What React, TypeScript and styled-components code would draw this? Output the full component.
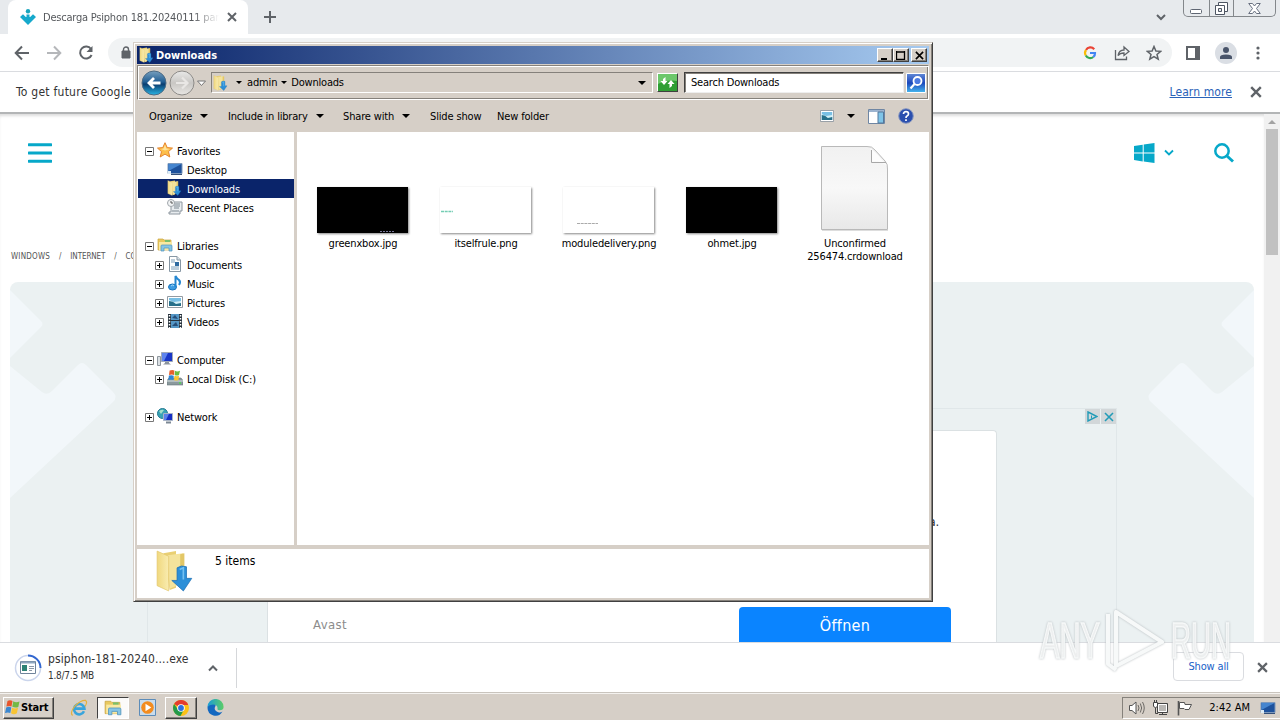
import React from "react";
import styled, { createGlobalStyle, css } from "styled-components";

const GlobalStyle = createGlobalStyle`
  * { box-sizing: border-box; }
  body {
    margin: 0;
    overflow: hidden;
    font-family: "DejaVu Sans Condensed", "DejaVu Sans", sans-serif;
    font-size: 11px;
    color: #000;
  }
  svg { display: block; flex: none; }
`;

const face = "#d6cfc7";
const navy = "#0a246a";
const cyan = "#06a8c9";
const chromeGrey = "#5f6368";

const raised = css`
  border: 1px solid;
  border-color: #fff #404040 #404040 #fff;
  box-shadow: inset -1px -1px 0 #85817b;
`;

/* spacing nudges a run of text to its Tahoma width */
const Label = styled.span<{ $size?: number; $spacing?: number; $color?: string; $bold?: boolean }>`
  font-size: ${(p) => p.$size ?? 11}px;
  letter-spacing: ${(p) => p.$spacing ?? -0.15}px;
  color: ${(p) => p.$color ?? "inherit"};
  font-weight: ${(p) => (p.$bold ? "bold" : "normal")};
  line-height: 13px;
  white-space: nowrap;
`;

const Desktop = styled.div`
  position: relative;
  display: flex;
  flex-direction: column;
  width: 1280px;
  height: 720px;
  overflow: hidden;
  background: #fff;
`;

/* ---------- browser ---------- */

const TabStrip = styled.div`
  display: flex;
  height: 34px;
  background: #e7eaed;
`;

const Tab = styled.div`
  display: flex;
  align-items: center;
  width: 240px;
  height: 34px;
  margin-left: 8px;
  padding-left: 12px;
  border-radius: 8px 8px 0 0;
  background: #fff;
`;

const TabTitle = styled.div`
  width: 176px;
  margin: 0 8px 0 7px;
  overflow: hidden;
  mask-image: linear-gradient(to right, #000 150px, transparent 176px);
`;

const NewTab = styled.div`
  padding: 11px 0 0 16px;
`;

const TabSearch = styled.div`
  margin-left: auto;
  padding: 12px 17px 0 0;
`;

const WindowControls = styled.div`
  display: flex;
  width: 93px;
  height: 17px;
  margin-right: 4px;
  border: 1px solid #83878b;
  border-top: 0;
  border-radius: 0 0 5px 5px;
`;

const WindowControl = styled.div<{ $width: number }>`
  display: flex;
  align-items: center;
  justify-content: center;
  width: ${(p) => p.$width}px;
  & + & { border-left: 1px solid #83878b; }
`;

const Toolbar = styled.div`
  display: flex;
  align-items: center;
  height: 38px;
  padding: 0 14px;
  border-bottom: 1px solid #dadce0;
`;

const NavButtons = styled.div`
  display: flex;
  align-items: center;
  gap: 16px;
  width: 94px;
`;

const Omnibox = styled.div`
  display: flex;
  align-items: center;
  width: 1064px;
  height: 29px;
  padding: 0 10px 0 13px;
  border-radius: 15px;
  background: #f1f3f4;
`;

const OmniActions = styled.div`
  display: flex;
  align-items: center;
  gap: 16px;
  margin-left: auto;
`;

const ToolbarEnd = styled.div`
  display: flex;
  align-items: center;
  justify-content: space-between;
  width: 81px;
  margin-left: 13px;
`;

const Avatar = styled.div`
  display: flex;
  align-items: center;
  justify-content: center;
  width: 22px;
  height: 22px;
  border-radius: 50%;
  background: #dadee4;
`;

const InfoBar = styled.div`
  display: flex;
  align-items: center;
  height: 42px;
  padding: 0 18px 0 16px;
  border-bottom: 2px solid #b3b5b6;
`;

const LearnMore = styled.a`
  margin: 0 18px 0 auto;
  color: #2a62b8;
  text-decoration: underline;
  text-underline-offset: 1px;
`;

const Viewport = styled.div`
  display: flex;
  height: 528px;
`;

const Page = styled.div`
  display: flex;
  flex-direction: column;
  width: 1264px;
  height: 528px;
  overflow: hidden;
  box-shadow: inset 0 3px 3px -1px #ddd;
`;

const SiteHeader = styled.div`
  display: flex;
  align-items: center;
  height: 78px;
  padding: 0 30px 0 28px;
`;

const SiteActions = styled.div`
  display: flex;
  align-items: center;
  margin-left: auto;
`;

const Chevron = styled.div`
  margin: 0 40px 0 9px;
`;

const Crumbs = styled.div`
  display: flex;
  gap: 9px;
  height: 90px;
  padding: 58px 0 0 11px;
`;

const Hero = styled.div`
  position: relative;
  width: 1244px;
  height: 360px;
  margin-left: 10px;
  padding: 126px 0 0 137px;
  border-radius: 8px 8px 0 0;
  background: #ebf1f2;
  overflow: hidden;
`;

const HeroPattern = styled.svg`
  position: absolute;
  inset: 0;
`;

const AdFrame = styled.div`
  position: relative;
  display: flex;
  width: 970px;
  height: 234px;
  padding: 21px 0 0 119px;
  border: 1px solid #e0e7e9;
  border-bottom: 0;
`;

const AdChoices = styled.div`
  position: absolute;
  top: 0;
  right: 0;
  display: flex;
  gap: 1px;
`;

const AdChip = styled.div`
  display: flex;
  align-items: center;
  justify-content: center;
  width: 15px;
  height: 15px;
  background: #d2d7d9;
`;

const AdCard = styled.div`
  display: flex;
  flex-direction: column;
  width: 730px;
  height: 212px;
  border: 1px solid #dbe1e3;
  border-bottom: 0;
  border-radius: 4px 4px 0 0;
  background: #fff;
`;

const AdText = styled.div`
  height: 176px;
  padding: 84px 57px 0 0;
  text-align: right;
`;

const AdFooter = styled.div`
  display: flex;
  align-items: center;
  justify-content: space-between;
  height: 35px;
  padding: 0 45px;
`;

const OpenButton = styled.div`
  display: flex;
  align-items: center;
  justify-content: center;
  width: 212px;
  height: 35px;
  padding-top: 1px;
  border-radius: 4px 4px 0 0;
  background: #0a84ff;
  color: #fff;
`;

const Scrollbar = styled.div`
  display: flex;
  flex-direction: column;
  align-items: center;
  width: 16px;
  height: 528px;
  padding-top: 5px;
  background: #f1f1f1;
`;

const Thumb = styled.div`
  width: 12px;
  height: 126px;
  margin-top: 4px;
  background: #c1c1c1;
`;

const Shelf = styled.div`
  display: flex;
  align-items: center;
  height: 50px;
  padding: 0 12px 0 14px;
  border-top: 1px solid #dadce0;
`;

const DownloadItem = styled.div`
  display: flex;
  align-items: center;
  width: 223px;
  height: 40px;
  border-right: 1px solid #d5d7da;
`;

const DownloadText = styled.div`
  display: flex;
  flex-direction: column;
  gap: 3px;
  width: 160px;
  margin-left: 6px;
`;

const ShowAll = styled.div`
  display: flex;
  align-items: center;
  justify-content: center;
  width: 71px;
  height: 29px;
  margin: 0 13px 2px auto;
  border: 1px solid #dadce0;
  border-radius: 4px;
`;

/* ---------- taskbar ---------- */

const Taskbar = styled.div`
  display: flex;
  align-items: center;
  height: 28px;
  padding: 2px 0 0 3px;
  border-top: 1px solid #c9c4bd;
  background: ${face};
  box-shadow: inset 0 1px 0 #f4f2ef;
`;

const StartButton = styled.div`
  ${raised}
  display: flex;
  align-items: center;
  width: 51px;
  height: 22px;
  margin-right: 9px;
`;

const TaskButton = styled.div<{ $state?: "pressed" | "raised" }>`
  display: flex;
  align-items: center;
  justify-content: center;
  width: 32px;
  height: 22px;
  margin-right: 2px;
  border: 1px solid transparent;
  ${(p) => p.$state === "raised" && raised}
  ${(p) =>
    p.$state === "pressed" &&
    css`
      border-color: #404040 #fff #fff #404040;
      background: #fbfaf9;
    `}
`;

const Tray = styled.div`
  display: flex;
  align-items: center;
  width: 158px;
  height: 22px;
  margin-left: auto;
  padding: 0 4px 0 5px;
  border: 1px solid #85817b;
  border-right: 0;
  border-bottom-color: #fff;
`;

const Clock = styled.div`
  margin: 0 10px 0 auto;
`;

/* ---------- explorer window ---------- */

const ExplorerWindow = styled.div`
  position: absolute;
  left: 133px;
  top: 42px;
  display: flex;
  flex-direction: column;
  width: 800px;
  height: 560px;
  padding: 3px 3px 2px;
  border: 1px solid;
  border-color: ${face} #404040 #404040 ${face};
  background: ${face};
  box-shadow: inset 1px 1px 0 #fff, inset -1px -1px 0 #85817b;
`;

const TitleBar = styled.div`
  display: flex;
  align-items: center;
  gap: 1px;
  height: 18px;
  padding: 0 2px;
  background: linear-gradient(to right, ${navy}, #a6caf0);
  color: #fff;
`;

const CaptionButtons = styled.div`
  display: flex;
  margin-left: auto;
`;

const CaptionButton = styled.div<{ $gap?: boolean }>`
  ${raised}
  display: flex;
  align-items: center;
  justify-content: center;
  width: 16px;
  height: 14px;
  margin-left: ${(p) => (p.$gap ? 2 : 0)}px;
  background: ${face};
`;

const AddressRow = styled.div`
  display: flex;
  align-items: center;
  height: 35px;
  margin-top: 1px;
  padding: 0 2px 0 3px;
  border: 1px solid;
  border-color: #85817b #fff #fff #85817b;
  box-shadow: inset 1px 1px 0 #fff, inset -1px -1px 0 #85817b;
`;

const AddressField = styled.div`
  display: flex;
  align-items: center;
  width: 444px;
  height: 21px;
  margin-left: 4px;
  padding: 0 6px 0 1px;
  border: 1px solid;
  border-color: #85817b #fff #fff #85817b;
`;

const Crumb = styled.div`
  display: flex;
  align-items: center;
  gap: 5px;
  margin-left: 7px;
  & + & { margin-left: 4px; gap: 4px; }
`;

const DropArrow = styled.i<{ $size?: number }>`
  width: 0;
  height: 0;
  border: ${(p) => p.$size ?? 4}px solid transparent;
  border-top-color: #000;
  border-bottom: 0;
`;

const AddressArrow = styled.div`
  margin-left: auto;
`;

const RefreshButton = styled.div`
  ${raised}
  margin: 0 6px 0 4px;
`;

const SearchField = styled.div`
  display: flex;
  align-items: center;
  width: 221px;
  height: 21px;
  margin-right: 2px;
  padding-left: 6px;
  border: 1px solid;
  border-color: #404040 #eee #eee #404040;
  box-shadow: inset 1px 1px 0 #85817b;
  background: #fff;
`;

const CommandBar = styled.div`
  display: flex;
  align-items: center;
  height: 32px;
  padding: 0 15px 0 12px;
`;

const Command = styled.div<{ $width: number }>`
  display: flex;
  align-items: center;
  gap: 8px;
  width: ${(p) => p.$width}px;
`;

const CommandIcons = styled.div`
  display: flex;
  align-items: center;
  gap: 13px;
  margin-left: auto;
`;

const Body = styled.div`
  display: flex;
  height: 413px;
`;

const NavPane = styled.div`
  width: 157px;
  padding: 9px 0 0 1px;
  background: #fff;
`;

const FilePane = styled.div`
  display: flex;
  align-items: flex-start;
  width: 632px;
  margin-left: 3px;
  padding: 10px 0 0 4px;
  background: #fff;
`;

const TreeRow = styled.div<{ $child?: boolean; $selected?: boolean }>`
  display: flex;
  align-items: center;
  height: 19px;
  padding-left: ${(p) => (p.$child ? 17 : 7)}px;
  background: ${(p) => (p.$selected ? navy : "transparent")};
  color: ${(p) => (p.$selected ? "#fff" : "#000")};
`;

const TreeGap = styled.div`
  height: 19px;
`;

const Toggle = styled.div<{ $hidden?: boolean }>`
  width: 9px;
  height: 9px;
  margin: 1px 3px 0 0;
  visibility: ${(p) => (p.$hidden ? "hidden" : "visible")};
`;

const IconSlot = styled.div`
  margin: -1px 4px 0 0;
`;

const TreeLabel = styled.div`
  margin-top: 2px;
`;

const FileItem = styled.div`
  display: flex;
  flex-direction: column;
  align-items: center;
  width: 123px;
`;

const ThumbBox = styled.div<{ $lift?: number }>`
  display: flex;
  flex-direction: column;
  align-items: center;
  justify-content: flex-end;
  height: 91px;
  margin-bottom: 4px;
  padding-bottom: ${(p) => p.$lift ?? 0}px;
`;

const Thumbnail = styled.div<{ $dark?: boolean }>`
  width: 91px;
  height: 46px;
  background: ${(p) => (p.$dark ? "#000" : "#fff")};
  box-shadow: 1px 1px 2px #888;
`;

const FileName = styled.div`
  width: 110px;
  padding-left: 1px;
  text-align: center;
  line-height: 13px;
`;

const DetailsPane = styled.div`
  display: flex;
  height: 49px;
  margin-top: 4px;
  padding: 1px 0 0 18px;
  background: #fff;
`;

const DetailsText = styled.div`
  margin: 5px 0 0 18px;
`;

const Watermark = styled.svg`
  position: absolute;
  left: 1034px;
  top: 604px;
`;

const WatermarkInk = styled.g`
  fill: #f7f9f9;
  fill-opacity: 0.8;
  stroke: #f7f9f9;
  stroke-width: 1.6px;
  font: 50px "Liberation Sans Narrow", "Liberation Sans", sans-serif;
  filter: drop-shadow(0 0 1px #b4babd);
`;

/* ---------- drawings ---------- */

const CloseX = ({ size = 10, color = chromeGrey, width = 2 }: { size?: number; color?: string; width?: number }) => (
  <svg width={size} height={size} viewBox="0 0 10 10">
    <path d="M1 1L9 9M9 1L1 9" stroke={color} strokeWidth={width} />
  </svg>
);

const FolderDown = ({ size = 16 }: { size?: number }) => (
  <svg width={size} height={size} viewBox="0 0 40 40">
    <defs>
      <linearGradient id="folderFlap" x1="0" x2="1">
        <stop offset="0" stopColor="#f0d87e" />
        <stop offset="1" stopColor="#f9ecb0" />
      </linearGradient>
    </defs>
    <path d="M8 3L20 1V36L14 38Z" fill="#e9cf73" />
    <path d="M12 5L27 3V31L14 37Z" fill="#f4e39c" />
    <path d="M24 4L28 3V31L24 33Z" fill="#e3c767" />
    <path d="M2 1L13 6V39L2 34Z" fill="url(#folderFlap)" stroke="#e0c468" strokeWidth=".6" />
    <path d="M21 17Q25 14 30 16V27H35L27 39L16 29H21Z" fill="#2c8fd8" stroke="#1b6fb4" strokeWidth=".7" />
    <path d="M23.5 18.5L27 17V28" stroke="#73c1f2" strokeWidth="1.6" fill="none" />
  </svg>
);

const LibraryFolder = ({ size = 16 }: { size?: number }) => (
  <svg width={size} height={size} viewBox="0 0 16 16">
    <path d="M1 2H6L7 3H14V13H1Z" fill="#e9c95f" stroke="#c9a441" strokeWidth=".7" />
    <path d="M2 5H15V13H2Z" fill="#f9e9a3" />
    <path d="M8 3h5v2H8z" fill="#7ac06c" />
    <path d="M4 14V9Q4 8 5 8H14Q15 8 15 9V14H12V11H7V14Z" fill="#86c5e5" stroke="#4f93bd" strokeWidth=".7" />
  </svg>
);

const MonitorIcon = () => (
  <svg width="16" height="16" viewBox="0 0 16 16">
    <path d="M1 2.5H15V12.5H1Z" fill="#1d519c" stroke="#7d98bb" />
    <path d="M1.5 3H14.5L1.5 10Z" fill="#4585cf" />
    <path d="M1 10H4V13H1Z" fill="#dcebf6" />
    <path d="M4 13.5H15" stroke="#34507a" />
  </svg>
);

const StarIcon = () => (
  <svg width="16" height="16" viewBox="0 0 16 16">
    <path d="M8 .7L10.2 5.6L15.5 6.1L11.5 9.6L12.8 15L8 12.1L3.2 15L4.5 9.6L.5 6.1L5.8 5.6Z" fill="#fdbf4a" stroke="#e5842d" />
    <path d="M8 2.8L9.4 6.5L13 7L8 8.5L4 7L6.5 6.5Z" fill="#ffe39a" />
  </svg>
);

const RecentIcon = () => (
  <svg width="16" height="16" viewBox="0 0 16 16">
    <path d="M4 3H15V12H13V15H2V13H4Z" fill="#e8ecef" stroke="#8d969e" />
    <path d="M7 5H13M7 7H13M7 9H12M5 12H12" stroke="#7d8891" />
    <circle cx="4" cy="4" r="3.5" fill="#f2f4f5" stroke="#a0a6ab" />
    <path d="M4 2V4H6" stroke="#555" fill="none" />
  </svg>
);

const DocumentIcon = () => (
  <svg width="16" height="16" viewBox="0 0 16 16">
    <path d="M2.5 .5H10L13.5 4V15.5H2.5Z" fill="#fff" stroke="#8797a4" />
    <path d="M10 .5V4H13.5" fill="#dbe4ea" stroke="#8797a4" />
    <path d="M4 4H8M4 6H8M4 11H12M4 13H12" stroke="#7b9db9" />
    <path d="M8 6H12V10H8Z" fill="#2f6aa0" />
  </svg>
);

const MusicIcon = () => (
  <svg width="16" height="16" viewBox="0 0 16 16">
    <ellipse cx="5.5" cy="12" rx="4" ry="3" fill="#3b9be2" stroke="#1874bd" />
    <path d="M8.5 12V1Q10 4 12 5Q14 7 12 10" fill="none" stroke="#2587d1" strokeWidth="2" />
    <path d="M4 11Q6 9 7 11" stroke="#a5dafa" fill="none" />
  </svg>
);

const PictureIcon = ({ width = 16 }: { width?: number }) => (
  <svg width={width} height="16" viewBox="0 0 16 16" preserveAspectRatio="none">
    <path d="M.5 2.5H15.5V13.5H.5Z" fill="#fff" stroke="#939ba2" />
    <path d="M2 4H14V12H2Z" fill="#78bfe4" />
    <path d="M2 6L7 8L14 7V10H2Z" fill="#d4f0f6" />
    <path d="M2 7Q6 7 9 10L14 9V12H2Z" fill="#27708a" />
  </svg>
);

const VideoIcon = () => (
  <svg width="16" height="16" viewBox="0 0 16 16">
    <path d="M1 1H15V15H1Z" fill="#27333d" />
    <path d="M4 1H12V7H4ZM4 8H12V15H4Z" fill="#5597c6" />
    <path d="M5 5L8 2L11 6ZM5 13L9 9L11 13Z" fill="#264e79" />
    <path d="M2.5 2V15M13.5 2V15" stroke="#fff" strokeWidth="1.5" strokeDasharray="1.5 1.5" />
  </svg>
);

const ComputerIcon = () => (
  <svg width="16" height="16" viewBox="0 0 16 16">
    <path d="M.5 5.5H3.5V14.5H.5Z" fill="#dbe0e4" stroke="#8e979e" />
    <path d="M4.5 1.5H15.5V10.5H4.5Z" fill="#1936c7" stroke="#9fa8b8" />
    <path d="M5 2H11L7 10H5Z" fill="#5d83ed" />
    <path d="M8 11H12V12L14 13.5H6L8 12Z" fill="#8a939c" />
  </svg>
);

const DiskIcon = () => (
  <svg width="16" height="16" viewBox="0 0 16 16">
    <path d="M0 10.5L2 8H14L16 10.5V15H0Z" fill="#8b999d" stroke="#66757a" strokeWidth=".6" />
    <path d="M0 11H16" stroke="#d9e3e5" />
    <path d="M12 13H14" stroke="#47e04a" strokeWidth="1.5" />
    <path d="M2.6 .6Q5.6 -.6 7.4 .6L7 5Q5 4 2 5Z" fill="#e8602c" />
    <path d="M8 .7Q10 2 13 .8L12 5Q10 6 7.6 5Z" fill="#6dbd3f" />
    <path d="M1.9 5.6Q5 5 6.8 5.7L6.3 10Q4 9 1.3 10Z" fill="#2f85d3" />
    <path d="M7.5 5.8Q10 6.5 12 5.8L11.5 10Q9 11 7 10Z" fill="#fbc52e" />
  </svg>
);

const NetworkIcon = () => (
  <svg width="16" height="16" viewBox="0 0 16 16">
    <circle cx="5.5" cy="5.5" r="5" fill="#39a3b5" stroke="#247a92" />
    <path d="M2 3Q5 1 7 2L4 6Z" fill="#a4e0cb" />
    <path d="M6.5 5.5H15.5V12.5H6.5Z" fill="#172fc4" stroke="#a8b4c7" />
    <path d="M7 6H12L9 12H7Z" fill="#5b80e9" />
    <path d="M9 14.5H14" stroke="#7c8894" strokeWidth="2" />
  </svg>
);

const PlusMinus = ({ open }: { open?: boolean }) => (
  <svg width="9" height="9" viewBox="0 0 9 9">
    <path d="M.5 .5H8.5V8.5H.5Z" fill="#fff" stroke="#777" />
    <path d={open ? "M2 4.5H7" : "M2 4.5H7M4.5 2V7"} stroke="#000" />
  </svg>
);

const WindowsFlag = ({ size = 17 }: { size?: number }) => (
  <svg width={size} height={size} viewBox="0 0 17 17">
    <path d="M3.5 2Q6 .5 8.5 2L7.5 7.5Q5 6.5 2.4 7.6Z" fill="#e8552b" />
    <path d="M9.3 2.3Q12 4 15.5 2.4L14.3 8Q11.5 9.3 8.3 7.8Z" fill="#73b945" />
    <path d="M2.2 8.4Q5 7.3 7.3 8.5L6.3 14Q4 12.8 1 14Z" fill="#3b87d0" />
    <path d="M8.1 8.7Q11 10.2 14 8.8L12.9 14.3Q10 16 7 14.3Z" fill="#f8c434" />
  </svg>
);

const IEIcon = () => (
  <svg width="18" height="18" viewBox="0 0 18 18">
    <path d="M14 12.3A5.2 5.2 0 1 1 14.4 9.6H5" fill="none" stroke="#38a4dc" strokeWidth="2.6" />
    <path d="M2.6 16.5Q-.5 14 5 7Q11 1 15.6 1.4Q17.8 3 15 7.5" fill="none" stroke="#e4b13c" strokeWidth="1.2" />
  </svg>
);

const PlayerIcon = () => (
  <svg width="17" height="17" viewBox="0 0 17 17">
    <path d="M.5 .5H16.5V16.5H.5Z" fill="#c9dcec" stroke="#5c8cb9" />
    <circle cx="8.5" cy="8.5" r="6.3" fill="#f38c1f" />
    <path d="M6.5 4.8L12.3 8.5L6.5 12.2Z" fill="#fff" />
  </svg>
);

const ChromeIcon = () => (
  <svg width="16" height="16" viewBox="0 0 16 16">
    <circle cx="8" cy="8" r="8" fill="#fbc116" />
    <path d="M8 8L1.1 4A8 8 0 0 1 14.9 4L15 5H8Z" fill="#e33b2e" />
    <path d="M1.1 4A8 8 0 0 0 7.5 16L11 9.5L8 11L5 9.5Z" fill="#249a4a" />
    <circle cx="8" cy="8" r="3.8" fill="#fff" />
    <circle cx="8" cy="8" r="2.9" fill="#2c70df" />
  </svg>
);

const EdgeIcon = () => (
  <svg width="17" height="17" viewBox="0 0 17 17">
    <defs>
      <linearGradient id="edgeTop" x1="0" x2="1">
        <stop offset="0" stopColor="#1a9cd8" />
        <stop offset="1" stopColor="#5ccd66" />
      </linearGradient>
    </defs>
    <path d="M.5 8.5Q1 4 6 4Q10 5 8 8Q6.5 12 12 13.5Q14 13.8 15.5 12.6A8 8 0 0 1 .5 8.5Z" fill="#1468c0" />
    <path d="M.5 8A8 8 0 0 1 16.6 8Q16.5 11.2 12.6 11.2Q9.8 11 10.6 9.2Q10.5 5.4 6 5.4Q2 5.8 .5 8Z" fill="url(#edgeTop)" />
  </svg>
);

const SpeakerIcon = () => (
  <svg width="18" height="16" viewBox="0 0 18 16">
    <path d="M1.5 5.5H4L8 2V14L4 10.5H1.5Z" fill="#fff" stroke="#555" />
    <path d="M10 5Q12 8 10 11M12.3 3.5Q15 8 12.3 12.5M14.5 2Q18 8 14.5 14" fill="none" stroke="#6d6a66" />
  </svg>
);

const TrayNetworkIcon = () => (
  <svg width="17" height="16" viewBox="0 0 17 16">
    <path d="M5.5 3.5H15.5V12.5H5.5Z" fill="#b9b7b4" stroke="#444" />
    <path d="M6.5 4.5H14.5V11.5H6.5Z" fill="none" stroke="#fff" />
    <path d="M7 14.5H15M10.5 13V15" stroke="#444" />
    <path d="M1.5 2.5H5.5V6Q5 7.5 3.5 7.5Q2 7.5 1.5 6Z" fill="#fff" stroke="#444" />
    <path d="M2.5 0V3M4.5 0V3M3.5 8V13.5H6" stroke="#444" fill="none" />
  </svg>
);

const FlagIcon = () => (
  <svg width="17" height="16" viewBox="0 0 17 16">
    <path d="M2.5 1V15.5" stroke="#555" strokeWidth="1.6" />
    <path d="M3.5 2.5H8.5L9 4.5H15.5L13 9.5H9L8 8.5H3.5Z" fill="#fff" stroke="#555" />
  </svg>
);

const BlankFile = () => (
  <svg width="68" height="87" viewBox="0 0 68 87">
    <defs>
      <linearGradient id="paper" x1="0" y1="0" x2="0" y2="1">
        <stop offset="0" stopColor="#f1f1f1" />
        <stop offset=".5" stopColor="#f8f8f8" />
        <stop offset="1" stopColor="#e8e8e8" />
      </linearGradient>
    </defs>
    <path d="M.5 2.5H46Q51 2 54 6L64 17Q67 20 66.5 25V85.5H.5Z" fill="url(#paper)" stroke="#b9b9b9" />
    <path d="M1 86.5H67" stroke="#ddd" />
    <path d="M49 4Q52 10 50 18Q59 16 66 22L56 10Z" fill="#fdfdfd" />
    <path d="M50.5 6V18.5H65" fill="none" stroke="#a7a7a7" />
  </svg>
);

const AddressNav = () => (
  <svg width="66" height="27" viewBox="0 0 66 27">
    <defs>
      <linearGradient id="backFill" x1="0" y1="0" x2="0" y2="1">
        <stop offset="0" stopColor="#769fbe" />
        <stop offset=".45" stopColor="#235f94" />
        <stop offset=".55" stopColor="#0b3e70" />
        <stop offset="1" stopColor="#29b4e4" />
      </linearGradient>
      <linearGradient id="fwdFill" x1="0" y1="0" x2="0" y2="1">
        <stop offset="0" stopColor="#e9e9e8" />
        <stop offset=".5" stopColor="#c9c7c4" />
        <stop offset="1" stopColor="#e8e6e3" />
      </linearGradient>
    </defs>
    <circle cx="13" cy="14" r="12" fill="url(#backFill)" stroke="#4d6b84" />
    <path d="M13 9L8 14L13 19M8 14H19.5" stroke="#fff" strokeWidth="2.8" fill="none" />
    <circle cx="41" cy="14" r="12" fill="url(#fwdFill)" stroke="#8d8b88" />
    <path d="M41 8.5L46.5 14L41 19.5M46 14H35" stroke="#e9e7e5" strokeWidth="2.2" fill="none" />
    <path d="M56.5 12H64.5L60.5 16.5Z" fill="#fff" stroke="#777" />
  </svg>
);

const tree = [
  { text: "Favorites", icon: <StarIcon />, toggle: "open" },
  { text: "Desktop", icon: <MonitorIcon />, child: true },
  { text: "Downloads", icon: <FolderDown />, child: true, selected: true },
  { text: "Recent Places", icon: <RecentIcon />, child: true },
  null,
  { text: "Libraries", icon: <LibraryFolder />, toggle: "open" },
  { text: "Documents", icon: <DocumentIcon />, child: true, toggle: "closed" },
  { text: "Music", icon: <MusicIcon />, child: true, toggle: "closed" },
  { text: "Pictures", icon: <PictureIcon />, child: true, toggle: "closed" },
  { text: "Videos", icon: <VideoIcon />, child: true, toggle: "closed" },
  null,
  { text: "Computer", icon: <ComputerIcon />, toggle: "open" },
  { text: "Local Disk (C:)", icon: <DiskIcon />, child: true, toggle: "closed" },
  null,
  { text: "Network", icon: <NetworkIcon />, toggle: "closed" },
];

const Explorer = () => (
  <ExplorerWindow>
    <TitleBar>
      <FolderDown />
      <Label $bold $spacing={0}>Downloads</Label>
      <CaptionButtons>
        <CaptionButton>
          <svg width="10" height="9"><path d="M1 8H7" stroke="#000" strokeWidth="2" /></svg>
        </CaptionButton>
        <CaptionButton>
          <svg width="10" height="9"><path d="M.5 1H8.5M.5 0V8.5H8.5V0" fill="none" stroke="#000" strokeWidth="1.3" /></svg>
        </CaptionButton>
        <CaptionButton $gap>
          <CloseX size={9} color="#000" width={1.8} />
        </CaptionButton>
      </CaptionButtons>
    </TitleBar>
    <AddressRow>
      <AddressNav />
      <AddressField>
        <FolderDown />
        <Crumb>
          <DropArrow $size={3} />
          <Label>admin</Label>
        </Crumb>
        <Crumb>
          <DropArrow $size={3} />
          <Label $spacing={-0.2}>Downloads</Label>
        </Crumb>
        <AddressArrow><DropArrow as="div" /></AddressArrow>
      </AddressField>
      <RefreshButton>
        <svg width="19" height="17" viewBox="0 0 19 17">
          <path d="M0 0H19V17H0Z" fill="#2f9e34" />
          <path d="M0 0H19V7Q9 5 0 10Z" fill="#6cc76a" />
          <path d="M7.5 3L5 5V7H2.5L6 11L9.5 7H7.5Z" fill="#fff" />
          <path d="M11.5 14L14 12V10H16.5L13 6L9.5 10H11.5Z" fill="#fff" />
        </svg>
      </RefreshButton>
      <SearchField>
        <Label $spacing={-0.2}>Search Downloads</Label>
      </SearchField>
      <svg width="20" height="20" viewBox="0 0 20 20">
        <defs>
          <linearGradient id="searchFill" x1="0" y1="0" x2="0" y2="1">
            <stop offset="0" stopColor="#6289d6" />
            <stop offset=".5" stopColor="#1c48bc" />
            <stop offset="1" stopColor="#46b8ef" />
          </linearGradient>
        </defs>
        <path d="M.5 .5H19.5V19.5H.5Z" fill="url(#searchFill)" stroke="#fff" />
        <circle cx="11.5" cy="8" r="4" fill="#4c7ae0" stroke="#fff" strokeWidth="1.8" />
        <path d="M8.5 11L4.5 15.5" stroke="#fff" strokeWidth="2.2" />
      </svg>
    </AddressRow>
    <CommandBar>
      <Command $width={79}><Label>Organize</Label><DropArrow /></Command>
      <Command $width={115}><Label $spacing={-0.2}>Include in library</Label><DropArrow /></Command>
      <Command $width={87}><Label>Share with</Label><DropArrow /></Command>
      <Command $width={67}><Label>Slide show</Label></Command>
      <Command $width={70}><Label>New folder</Label></Command>
      <CommandIcons>
        <PictureIcon width={14} />
        <DropArrow />
        <svg width="17" height="15" viewBox="0 0 17 15">
          <path d="M.5 .5H16.5V14.5H.5Z" fill="#fff" stroke="#6f86a3" />
          <path d="M1 2H16" stroke="#9db4cf" strokeWidth="2" />
          <path d="M10 3H15.5V14H10Z" fill="#7fc4e8" stroke="#54789c" />
        </svg>
        <svg width="16" height="16" viewBox="0 0 16 16">
          <circle cx="8" cy="8" r="7.3" fill="#2b4fae" stroke="#8898c0" />
          <path d="M5.5 6Q5.5 3.7 8 3.7T10.5 6Q10.5 7.2 9 8Q8 8.5 8 10M8 11.2V13" fill="none" stroke="#fff" strokeWidth="1.7" />
        </svg>
      </CommandIcons>
    </CommandBar>
    <Body>
      <NavPane>
        {tree.map((row, i) =>
          row ? (
            <TreeRow key={row.text} $child={row.child} $selected={row.selected}>
              <Toggle $hidden={!row.toggle}><PlusMinus open={row.toggle === "open"} /></Toggle>
              <IconSlot>{row.icon}</IconSlot>
              <TreeLabel><Label>{row.text}</Label></TreeLabel>
            </TreeRow>
          ) : (
            <TreeGap key={i} />
          )
        )}
      </NavPane>
      <FilePane>
        <FileItem>
          <ThumbBox>
            <Thumbnail $dark>
              <svg width="91" height="46"><path d="M63 44.5H77" stroke="#777798" strokeDasharray="2 1" /></svg>
            </Thumbnail>
          </ThumbBox>
          <FileName><Label>greenxbox.jpg</Label></FileName>
        </FileItem>
        <FileItem>
          <ThumbBox>
            <Thumbnail>
              <svg width="91" height="46"><path d="M1 24.5H13" stroke="#74cdb4" strokeWidth="1.5" strokeDasharray="3 .7" /></svg>
            </Thumbnail>
          </ThumbBox>
          <FileName><Label>itselfrule.png</Label></FileName>
        </FileItem>
        <FileItem>
          <ThumbBox>
            <Thumbnail>
              <svg width="91" height="46"><path d="M14 36.5H35" stroke="#aaa" strokeDasharray="3 .7" /></svg>
            </Thumbnail>
          </ThumbBox>
          <FileName><Label>moduledelivery.png</Label></FileName>
        </FileItem>
        <FileItem>
          <ThumbBox><Thumbnail $dark /></ThumbBox>
          <FileName><Label>ohmet.jpg</Label></FileName>
        </FileItem>
        <FileItem>
          <ThumbBox $lift={2}><BlankFile /></ThumbBox>
          <FileName>
            <Label>Unconfirmed</Label>
            <br />
            <Label>256474.crdownload</Label>
          </FileName>
        </FileItem>
      </FilePane>
    </Body>
    <DetailsPane>
      <FolderDown size={42} />
      <DetailsText><Label $size={12} $spacing={0}>5 items</Label></DetailsText>
    </DetailsPane>
  </ExplorerWindow>
);

const App: React.FC = () => (
  <Desktop>
    <GlobalStyle />
    <TabStrip>
      <Tab>
        <svg width="16" height="16" viewBox="0 0 16 16">
          <circle cx="8" cy="2.3" r="2.2" fill="#19a5bd" />
          <path d="M0 8L3 5.2L5.8 8H6.5V5.5H9.5V8H10.2L13 5.2L16 8L8 16Z" fill="#16a9cc" />
        </svg>
        <TabTitle><Label $color="#55585c" $spacing={-0.22}>Descarga Psiphon 181.20240111 para</Label></TabTitle>
        <CloseX />
      </Tab>
      <NewTab>
        <svg width="12" height="12"><path d="M6 0V12M0 6H12" stroke={chromeGrey} strokeWidth="2" /></svg>
      </NewTab>
      <TabSearch>
        <svg width="10" height="10"><path d="M1 3L5 7L9 3" fill="none" stroke={chromeGrey} strokeWidth="2" /></svg>
      </TabSearch>
      <WindowControls>
        <WindowControl $width={25}>
          <svg width="13" height="12"><rect x=".5" y="7.5" width="11" height="4" rx="1" fill="#fff" stroke="#5f6673" /></svg>
        </WindowControl>
        <WindowControl $width={25}>
          <svg width="13" height="13" viewBox="0 0 13 13">
            <path d="M3.5 3.5V.5H12.5V9.5H9.5M.5 3.5H9.5V12.5H.5Z" fill="#fff" stroke="#4d5562" />
            <path d="M3.5 6.5H6.5V9.5H3.5Z" fill="#e7eaed" stroke="#4d5562" />
          </svg>
        </WindowControl>
        <WindowControl $width={42}>
          <svg width="13" height="11" viewBox="0 0 13 11">
            <path d="M.7 .5H4.5L6.5 3L8.5 .5H12.3L8.5 5.5L12.3 10.5H8.5L6.5 8L4.5 10.5H.7L4.5 5.5Z" fill="#fff" stroke="#687080" />
          </svg>
        </WindowControl>
      </WindowControls>
    </TabStrip>
    <Toolbar>
      <NavButtons>
        <svg width="16" height="16"><path d="M15 8H2M8 1.5L1.7 8L8 14.5" fill="none" stroke={chromeGrey} strokeWidth="2" /></svg>
        <svg width="16" height="16"><path d="M1 8H14M8 1.5L14.3 8L8 14.5" fill="none" stroke="#b5b7ba" strokeWidth="2" /></svg>
        <svg width="16" height="16">
          <path d="M13 4A6 6 0 1 0 13.6 10" fill="none" stroke={chromeGrey} strokeWidth="2" />
          <path d="M14.5 1V7H8.5Z" fill={chromeGrey} />
        </svg>
      </NavButtons>
      <Omnibox>
        <svg width="10" height="13">
          <path d="M1 5H9V12H1Z" fill={chromeGrey} stroke={chromeGrey} />
          <path d="M2.5 5V3.5A2.5 2.5 0 0 1 7.5 3.5V5" fill="none" stroke={chromeGrey} strokeWidth="1.4" />
        </svg>
        <OmniActions>
          <svg width="16" height="16" viewBox="0 0 16 16">
            <path d="M12.2 4.2A5 5 0 0 0 4 5" fill="none" stroke="#ea4335" strokeWidth="2.2" />
            <path d="M4 5A5 5 0 0 0 3.8 10.5" fill="none" stroke="#fbbc05" strokeWidth="2.2" />
            <path d="M3.8 10.5A5 5 0 0 0 11.3 12" fill="none" stroke="#34a853" strokeWidth="2.2" />
            <path d="M11.3 12A5 5 0 0 0 13 8H8" fill="none" stroke="#4285f4" strokeWidth="2.2" />
          </svg>
          <svg width="16" height="16" viewBox="0 0 16 16">
            <path d="M1.5 5V14.5H12.5V11.5" fill="none" stroke={chromeGrey} strokeWidth="1.3" />
            <path d="M4 10.5Q5 5 10 5V2L15 6.5L10 10.5V8Q6 8 4 10.5Z" fill="none" stroke={chromeGrey} strokeWidth="1.3" />
          </svg>
          <svg width="16" height="16" viewBox="0 0 16 16">
            <path d="M8 1.5L9.9 6L14.7 6.3L11 9.4L12.2 14.2L8 11.6L3.8 14.2L5 9.4L1.3 6.3L6.1 6Z" fill="none" stroke={chromeGrey} strokeWidth="1.5" />
          </svg>
        </OmniActions>
      </Omnibox>
      <ToolbarEnd>
        <svg width="16" height="14"><path d="M2 1H14V13H2Z" fill="#fff" stroke={chromeGrey} strokeWidth="2" /><path d="M10 1H15V13H10Z" fill={chromeGrey} /></svg>
        <Avatar>
          <svg width="14" height="14"><circle cx="7" cy="4" r="3" fill="#49546a" /><path d="M1 13V11Q1 8.5 7 8.5T13 11V13Z" fill="#49546a" /></svg>
        </Avatar>
        <svg width="16" height="14"><circle cx="8" cy="2" r="1.6" fill={chromeGrey} /><circle cx="8" cy="7" r="1.6" fill={chromeGrey} /><circle cx="8" cy="12" r="1.6" fill={chromeGrey} /></svg>
      </ToolbarEnd>
    </Toolbar>
    <InfoBar>
      <Label $size={12} $spacing={0.25} $color="#333">To get future Google</Label>
      <LearnMore><Label $size={12} $spacing={0.1}>Learn more</Label></LearnMore>
      <CloseX size={12} />
    </InfoBar>
    <Viewport>
      <Page>
        <SiteHeader>
          <svg width="24" height="20"><path d="M1 1.7H23M1 10H23M1 18.3H23" stroke={cyan} strokeWidth="3" strokeLinecap="round" /></svg>
          <SiteActions>
            <svg width="21" height="20" viewBox="0 0 21 20">
              <path d="M0 3L8.7 1.7V9.5H0ZM9.7 1.5L20.5 0V9.5H9.7ZM0 10.5H8.7V18.4L0 17ZM9.7 10.5H20.5V20L9.7 18.5Z" fill={cyan} />
            </svg>
            <Chevron>
              <svg width="10" height="8"><path d="M1 1.5L5 5.5L9 1.5" fill="none" stroke={cyan} strokeWidth="1.8" /></svg>
            </Chevron>
            <svg width="20" height="20"><circle cx="8" cy="8" r="6.7" fill="none" stroke={cyan} strokeWidth="2.5" /><path d="M13 13L19 18.5" stroke={cyan} strokeWidth="3" /></svg>
          </SiteActions>
        </SiteHeader>
        <Crumbs>
          <Label $size={8} $spacing={0.22} $color="#555">WINDOWS</Label>
          <Label $size={8} $color="#555">/</Label>
          <Label $size={8} $spacing={-0.1} $color="#555">INTERNET</Label>
          <Label $size={8} $color="#555">/</Label>
          <Label $size={8} $spacing={-0.2} $color="#555">CO</Label>
        </Crumbs>
        <Hero>
          <HeroPattern width="1244" height="360" viewBox="0 0 1244 360">
            <g fill="#f2f7fa">
              <path d="M1244 8L1213 39Q1210 42 1213 45L1244 76Z" />
              <path d="M1244 84L1212 110Q1207 114 1202 109L1176 83Q1172 79 1168 83L1141 110Q1136 115 1141 120L1244 216Z" />
              <path d="M0 8L31 39Q34 42 31 45L0 76Z" />
              <path d="M0 84L32 110Q37 114 42 109L68 83Q72 79 76 83L103 110Q108 115 103 120L0 216Z" />
            </g>
          </HeroPattern>
          <AdFrame>
            <AdChoices>
              <AdChip>
                <svg width="11" height="11"><path d="M1 1L10 5.5L1 10Z" fill="none" stroke="#239cb8" strokeWidth="1.4" /><path d="M4.5 4.5V7.5" stroke="#239cb8" /></svg>
              </AdChip>
              <AdChip><CloseX color="#239cb8" width={1.6} /></AdChip>
            </AdChoices>
            <AdCard>
              <AdText><Label $size={13} $color="#333">a.</Label></AdText>
              <AdFooter>
                <Label $size={13} $spacing={0.4} $color="#8c8c8c">Avast</Label>
                <OpenButton><Label $size={16} $spacing={0.3}>Öffnen</Label></OpenButton>
              </AdFooter>
            </AdCard>
          </AdFrame>
        </Hero>
      </Page>
      <Scrollbar>
        <svg width="8" height="6"><path d="M0 5L4 1L8 5Z" fill="#a3a3a3" /></svg>
        <Thumb />
      </Scrollbar>
    </Viewport>
    <Shelf>
      <DownloadItem>
        <svg width="28" height="28" viewBox="0 0 28 28">
          <circle cx="14" cy="14" r="12.5" fill="#fff" stroke="#cbd5ec" strokeWidth="1.5" />
          <path d="M14 1.5A12.5 12.5 0 0 1 26.5 14" fill="none" stroke="#3267d0" strokeWidth="2" />
          <path d="M6.5 7.5H21.5V19.5H6.5Z" fill="#fff" stroke="#70849b" />
          <path d="M7 8.5H21" stroke="#8fa7be" strokeWidth="2" />
          <path d="M8 11H13V17H8Z" fill="#2e8275" />
          <path d="M15 12.5H20M15 14.5H20M15 16.5H18" stroke="#8c98a5" />
        </svg>
        <DownloadText>
          <Label $size={12} $spacing={0.1} $color="#333">psiphon-181-20240....exe</Label>
          <Label $size={10} $spacing={-0.25} $color="#333">1.8/7.5 MB</Label>
        </DownloadText>
        <svg width="10" height="8"><path d="M1 6.5L5 2.5L9 6.5" fill="none" stroke={chromeGrey} strokeWidth="2" /></svg>
      </DownloadItem>
      <ShowAll><Label $color="#1a62c8">Show all</Label></ShowAll>
      <CloseX size={11} />
    </Shelf>
    <Taskbar>
      <StartButton>
        <WindowsFlag />
        <Label $bold $spacing={-0.15}>Start</Label>
      </StartButton>
      <TaskButton><IEIcon /></TaskButton>
      <TaskButton $state="pressed"><LibraryFolder size={18} /></TaskButton>
      <TaskButton><PlayerIcon /></TaskButton>
      <TaskButton $state="raised"><ChromeIcon /></TaskButton>
      <TaskButton><EdgeIcon /></TaskButton>
      <Tray>
        <SpeakerIcon />
        <svg width="6" height="1" />
        <TrayNetworkIcon />
        <svg width="7" height="1" />
        <FlagIcon />
        <Clock><Label $spacing={0}>2:42 AM</Label></Clock>
        <MonitorIcon />
      </Tray>
    </Taskbar>
    <Explorer />
    <Watermark width="204" height="72" viewBox="0 0 204 72">
      <WatermarkInk>
        <text x="6" y="54" textLength="60" lengthAdjust="spacingAndGlyphs">ANY</text>
        <text x="137" y="54" textLength="60" lengthAdjust="spacingAndGlyphs">RUN</text>
        <path d="M74 10V60L82 66M82 8V62L128 38Z" fill="none" strokeWidth="4" strokeLinejoin="round" />
      </WatermarkInk>
    </Watermark>
  </Desktop>
);

export default App;
